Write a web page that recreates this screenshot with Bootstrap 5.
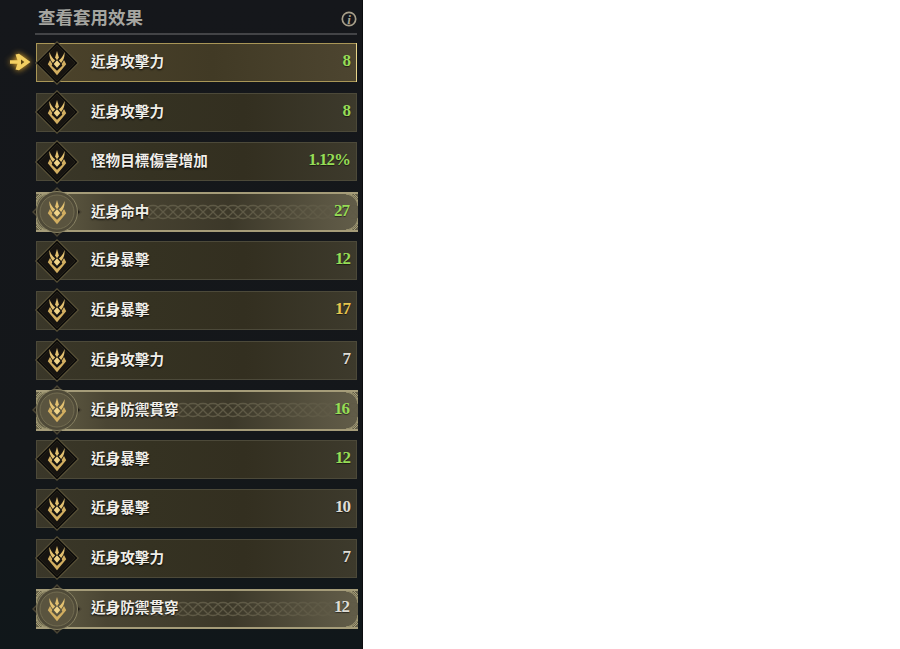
<!DOCTYPE html>
<html lang="zh-Hant">
<head>
<meta charset="utf-8">
<title>查看套用效果</title>
<link href="https://cdn.jsdelivr.net/npm/bootstrap@5.3.0/dist/css/bootstrap.min.css" rel="stylesheet">
<style>
html,body{height:100%;background:#fff;overflow:hidden}
.fx-panel{width:363px;height:649px;background:linear-gradient(180deg,#15171b 0%,#14171a 70%,#10171a 100%);border-right:1px solid #0c0d0f;padding:0 5px 0 35px;font-family:"Liberation Sans","Noto Sans CJK TC",sans-serif}
.fx-head{height:35px;border-bottom:2px solid #434447;padding:5px 1px 0 3px;margin-bottom:8px}
.fx-title{font:700 17.5px/24px "Noto Sans CJK TC",sans-serif;color:#a5a5a0;margin:0}
.fx-info{width:16px;height:16px;margin-top:6px;margin-right:-1px}
.fx-list{gap:10.6px;margin-left:1px}
.fx-row{height:39px;background:linear-gradient(90deg,#3a3729 0%,#353222 35%,#332f20 65%,#3d3a2c 100%);border:1px solid #4c4939;padding-right:6px}
.fx-sel{background:linear-gradient(90deg,#4c432b 0%,#413a25 55%,#4d4530 100%);border-color:#a99657}
.fx-rare{height:40.5px;margin-bottom:-1.5px;background:linear-gradient(90deg,#676249 0%,#4a4533 22%,#3c3829 60%,#5a5542 90%,#625d49 100%);border:0;border-top:2px solid #a59c79;border-bottom:2px solid #a59c79;padding-right:9px;margin-right:-1px}
.fx-ico{width:44px;height:44px;margin:-3px 0 -3px -2px;flex:none;z-index:2}
.fx-orb{width:50px;height:50px;margin:-6px 0 -6px -4px;flex:none;z-index:2}
.fx-name{font:700 14.6px/20px "Noto Sans CJK TC",sans-serif;color:#f0eee8;margin:-3px 0 0 12px;text-shadow:0 1px 2px #000;z-index:2;white-space:nowrap}
.fx-orb + .fx-name{margin-left:9px}
.fx-val{font:700 17px/20px "Liberation Serif",serif;letter-spacing:-1px;margin:-3px 0 0 auto;z-index:2;text-shadow:0 1px 1px #0008}
.fx-g{color:#96dd56}
.fx-y{color:#e6c54e}
.fx-w{color:#dfddd6}
.fx-braid{position:absolute;left:112px;top:10px;height:16px;width:calc(100% - 112px);z-index:1}
.fx-corner{position:absolute;width:13px;height:13px;z-index:1}
.fx-c1{left:0;top:0}
.fx-c2{right:0;top:0;transform:scaleX(-1)}
.fx-c3{left:0;bottom:0;transform:scaleY(-1)}
.fx-c4{right:0;bottom:0;transform:scale(-1,-1)}
.fx-cursor{position:absolute;left:-27px;top:7px;width:22px;height:22px;filter:drop-shadow(0 0 3px #f5b52e);z-index:3}
.fx-sel::after{content:"";position:absolute;right:-1px;top:-1px;width:3px;height:calc(100% + 2px);border-right:1px solid #e8d48a}
</style>
</head>
<body class="m-0">
<svg width="0" height="0" class="position-absolute">
<defs>
<g id="fx-emblem">
<path fill="#e2c070" d="M22 10l1.900 6.500-1.900 2.800-1.900-2.800z"/>
<path fill="#e2c070" d="M14.500 11C14 16 15.800 19.800 17.900 22L20.200 19.300C17.900 17.700 15.700 15.200 14.500 11z"/>
<path fill="#e2c070" d="M29.500 11C30 16 28.200 19.800 26.100 22L23.800 19.300C26.100 17.700 28.300 15.200 29.500 11z"/>
<path fill="#f0d48a" d="M22 19.200l3.300 3.800-3.300 3.800-3.300-3.800z"/>
<path fill="#d2ae60" d="M15 19L12.800 23.200 22 34.200 31.200 23.200 29 19 26.700 23 27.300 24.800 22 29.800 16.700 24.800 17.300 23z"/>
</g>
<symbol id="fx-dia" viewBox="0 0 44 44">
<path d="M22 0L44 22 22 44 0 22z" fill="#5c5439"/>
<path d="M22 1.500L42.500 22 22 42.500 1.500 22z" fill="#0b0a09"/>
<path d="M22 4L40 22 22 40 4 22z" fill="#171410" stroke="#2e2a1e" stroke-width=".6"/>
<use href="#fx-emblem"/>
</symbol>
<symbol id="fx-orbs" viewBox="-3 -3 50 50">
<path d="M22 -3L47 22 22 47 -3 22z" fill="#4a4534"/>
<path d="M22 -1L45 22 22 45 -1 22z" fill="#1d1a14"/>
<circle cx="22" cy="22" r="20.500" fill="#4f4a38" stroke="#8f8868" stroke-width=".9"/>
<circle cx="22" cy="22" r="17" fill="#5a543f" stroke="#7a7357" stroke-width=".8"/>
<use href="#fx-emblem"/>
</symbol>
<pattern id="fx-knot" width="10" height="16" patternUnits="userSpaceOnUse">
<path d="M0 3L5 8 0 13M10 3L5 8 10 13M0 3C2 1 8 1 10 3M0 13C2 15 8 15 10 13" fill="none" stroke="#5f5a46" stroke-width="1.300"/>
</pattern>
<symbol id="fx-cor" viewBox="0 0 13 13">
<path d="M0 12C.5 5.500 5.500 .5 12 0M0 8C1 4 4 1 8 0M0 4L4 0" fill="none" stroke="#a8a07a" stroke-width="1"/>
</symbol>
</defs>
</svg>

<main class="fx-panel">
  <header class="fx-head d-flex align-items-start justify-content-between">
    <h1 class="fx-title">查看套用效果</h1>
    <svg class="fx-info" viewBox="0 0 16 16" role="img" aria-label="資訊">
      <circle cx="8" cy="8" r="6.700" fill="none" stroke="#a79f8a" stroke-width="1.700"/>
      <text x="8" y="12.500" text-anchor="middle" font-family="Liberation Serif" font-style="italic" font-weight="700" font-size="13" fill="#a79f8a">i</text>
    </svg>
  </header>
  <div class="fx-list d-flex flex-column">
    <div class="fx-row fx-sel position-relative d-flex align-items-center">
      <svg class="fx-cursor" viewBox="0 0 22 22"><path fill="#f3cf62" d="M0 9.300h7.500L5.500 3.500l3.500-.8L20.500 11 9 19.300l-3.500-.8 2-5.800H0z"/><path fill="#5a4412" d="M11 8.500l3.300 2.500-3.300 2.500z"/></svg>
      <svg class="fx-ico position-relative"><use href="#fx-dia"/></svg>
      <span class="fx-name">近身攻擊力</span><span class="fx-val fx-g">8</span>
    </div>
    <div class="fx-row d-flex align-items-center">
      <svg class="fx-ico position-relative"><use href="#fx-dia"/></svg>
      <span class="fx-name">近身攻擊力</span><span class="fx-val fx-g">8</span>
    </div>
    <div class="fx-row d-flex align-items-center">
      <svg class="fx-ico position-relative"><use href="#fx-dia"/></svg>
      <span class="fx-name">怪物目標傷害增加</span><span class="fx-val fx-g">1.12%</span>
    </div>
    <div class="fx-row fx-rare position-relative d-flex align-items-center">
      <svg class="fx-braid"><rect width="100%" height="100%" fill="url(#fx-knot)"/></svg>
      <svg class="fx-corner fx-c1"><use href="#fx-cor"/></svg><svg class="fx-corner fx-c2"><use href="#fx-cor"/></svg><svg class="fx-corner fx-c3"><use href="#fx-cor"/></svg><svg class="fx-corner fx-c4"><use href="#fx-cor"/></svg>
      <svg class="fx-orb position-relative"><use href="#fx-orbs"/></svg>
      <span class="fx-name">近身命中</span><span class="fx-val fx-g">27</span>
    </div>
    <div class="fx-row d-flex align-items-center">
      <svg class="fx-ico position-relative"><use href="#fx-dia"/></svg>
      <span class="fx-name">近身暴擊</span><span class="fx-val fx-g">12</span>
    </div>
    <div class="fx-row d-flex align-items-center">
      <svg class="fx-ico position-relative"><use href="#fx-dia"/></svg>
      <span class="fx-name">近身暴擊</span><span class="fx-val fx-y">17</span>
    </div>
    <div class="fx-row d-flex align-items-center">
      <svg class="fx-ico position-relative"><use href="#fx-dia"/></svg>
      <span class="fx-name">近身攻擊力</span><span class="fx-val fx-w">7</span>
    </div>
    <div class="fx-row fx-rare position-relative d-flex align-items-center">
      <svg class="fx-braid"><rect width="100%" height="100%" fill="url(#fx-knot)"/></svg>
      <svg class="fx-corner fx-c1"><use href="#fx-cor"/></svg><svg class="fx-corner fx-c2"><use href="#fx-cor"/></svg><svg class="fx-corner fx-c3"><use href="#fx-cor"/></svg><svg class="fx-corner fx-c4"><use href="#fx-cor"/></svg>
      <svg class="fx-orb position-relative"><use href="#fx-orbs"/></svg>
      <span class="fx-name">近身防禦貫穿</span><span class="fx-val fx-g">16</span>
    </div>
    <div class="fx-row d-flex align-items-center">
      <svg class="fx-ico position-relative"><use href="#fx-dia"/></svg>
      <span class="fx-name">近身暴擊</span><span class="fx-val fx-g">12</span>
    </div>
    <div class="fx-row d-flex align-items-center">
      <svg class="fx-ico position-relative"><use href="#fx-dia"/></svg>
      <span class="fx-name">近身暴擊</span><span class="fx-val fx-w">10</span>
    </div>
    <div class="fx-row d-flex align-items-center">
      <svg class="fx-ico position-relative"><use href="#fx-dia"/></svg>
      <span class="fx-name">近身攻擊力</span><span class="fx-val fx-w">7</span>
    </div>
    <div class="fx-row fx-rare position-relative d-flex align-items-center">
      <svg class="fx-braid"><rect width="100%" height="100%" fill="url(#fx-knot)"/></svg>
      <svg class="fx-corner fx-c1"><use href="#fx-cor"/></svg><svg class="fx-corner fx-c2"><use href="#fx-cor"/></svg><svg class="fx-corner fx-c3"><use href="#fx-cor"/></svg><svg class="fx-corner fx-c4"><use href="#fx-cor"/></svg>
      <svg class="fx-orb position-relative"><use href="#fx-orbs"/></svg>
      <span class="fx-name">近身防禦貫穿</span><span class="fx-val fx-w">12</span>
    </div>
  </div>
</main>
<script src="https://cdn.jsdelivr.net/npm/bootstrap@5.3.0/dist/js/bootstrap.bundle.min.js"></script>
</body>
</html>
